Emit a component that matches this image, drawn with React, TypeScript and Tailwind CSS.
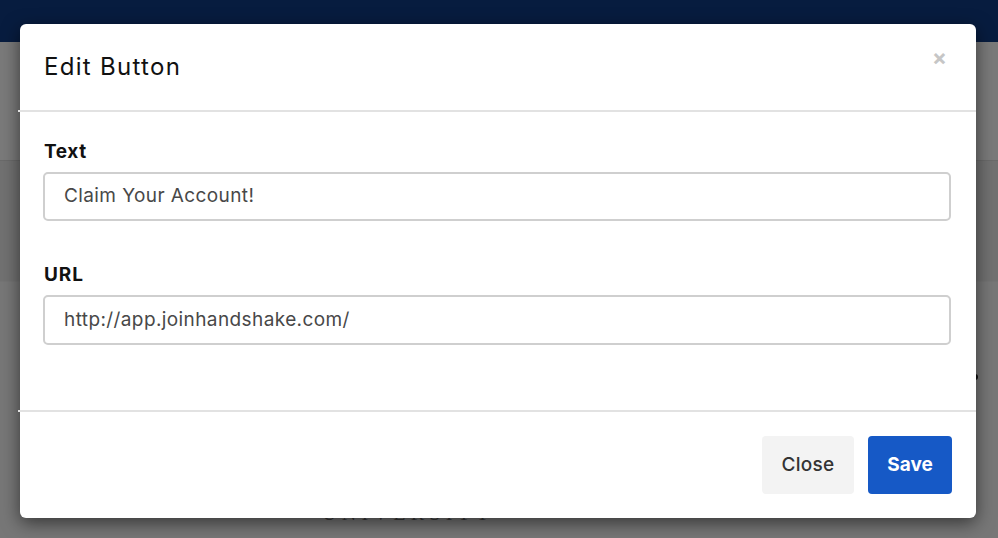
import React from "react";

export default function App() {
  return (
    <div className="relative w-[998px] h-[538px] overflow-hidden bg-[#777777] font-['Inter',sans-serif]">
      {/* background page (dimmed) */}
      <div className="h-[42px] bg-[#071c3f]" />
      <div className="h-[118px] bg-[#7a7a7a]" />
      <div className="h-px bg-[#6a6a6a]" />
      <div className="h-[120px] bg-[#717171]" />
      <div className="h-px bg-[#747474]" />
      <div className="h-[256px] bg-[#777777] flex flex-col">
        <div className="flex justify-end pr-[20px] pt-[92px]">
          <div className="w-[6px] h-[6px] rounded-full bg-[#111]" />
        </div>
        <div className="pl-[322px] pt-[121px] font-['Liberation_Serif',serif] text-[20px] leading-[24px] tracking-[5.3px] text-[#3a3a3a]">
          UNIVERSITY
        </div>
      </div>

      {/* modal */}
      <div className="absolute left-[20px] top-[24px] w-[956px] h-[494px] bg-white rounded-[6px] shadow-[0_5px_18px_rgba(0,0,0,0.55)] flex flex-col">
        <div className="h-[86px] flex items-start justify-between pl-[24px] pr-[29px]">
          <h2 className="mt-[28px] text-[24px] leading-[30px] tracking-[1.3px] text-[#111] font-normal">Edit Button</h2>
          <span className="mt-[20px] text-[22px] leading-[26px] font-bold text-[#c6c6c6]">×</span>
        </div>
        <div className="h-[2px] bg-[#e2e2e2] -ml-[2px]" />
        <div className="h-[298px] pl-[23px] pr-[25px] pt-[28px] flex flex-col">
          <label className="text-[19px] leading-[23px] tracking-[0.6px] font-bold text-[#111] ml-[1px]">Text</label>
          <div className="mt-[9px] h-[49px] border-2 border-[#cfcfcf] rounded-[5px] flex items-center pl-[19px] text-[19px] tracking-[0.4px] text-[#484848]">
            Claim Your Account!
          </div>
          <label className="mt-[42px] text-[19px] leading-[23px] tracking-[0.9px] font-bold text-[#111] ml-[1px]">URL</label>
          <div className="mt-[9px] h-[50px] border-2 border-[#cfcfcf] rounded-[5px] flex items-center pl-[19px] text-[19px] tracking-[0.4px] text-[#484848]">
            http://app.joinhandshake.com/
          </div>
        </div>
        <div className="h-[2px] bg-[#e2e2e2] -ml-[2px]" />
        <div className="flex justify-end gap-[14px] pt-[24px] pr-[24px]">
          <button className="w-[92px] h-[58px] rounded-[4px] bg-[#f3f3f3] text-[19px] tracking-[0.3px] font-medium text-[#333]">
            Close
          </button>
          <button className="w-[84px] h-[58px] rounded-[4px] bg-[#1659c6] text-[19px] font-bold text-white">
            Save
          </button>
        </div>
      </div>
    </div>
  );
}
